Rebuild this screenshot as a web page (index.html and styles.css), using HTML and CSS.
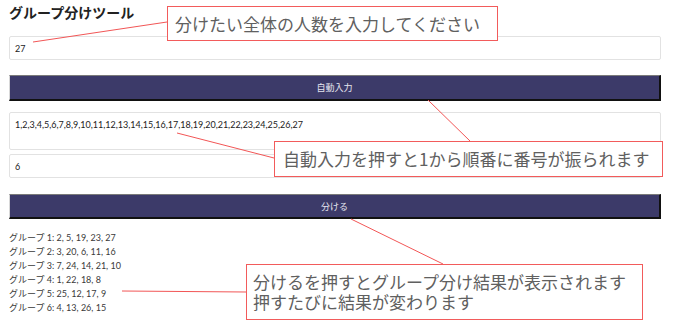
FILE: index.html
```html
<!DOCTYPE html>
<html lang="ja">
<head>
    <meta charset="UTF-8">
    <title>グループ分けツール</title>
    <link rel="stylesheet" href="styles.css">
</head>
<body>
    <main class="tool">
        <h1>グループ分けツール</h1>
        <input type="text" class="field" id="total" value="27">
        <button class="btn btn-auto">自動入力</button>
        <textarea class="field area" id="members">1,2,3,4,5,6,7,8,9,10,11,12,13,14,15,16,17,18,19,20,21,22,23,24,25,26,27</textarea>
        <input type="text" class="field field-groups" id="groups" value="6">
        <button class="btn btn-split">分ける</button>
        <div class="result">
            <p>グループ 1: 2, 5, 19, 23, 27</p>
            <p>グループ 2: 3, 20, 6, 11, 16</p>
            <p>グループ 3: 7, 24, 14, 21, 10</p>
            <p>グループ 4: 1, 22, 18, 8</p>
            <p>グループ 5: 25, 12, 17, 9</p>
            <p>グループ 6: 4, 13, 26, 15</p>
        </div>
    </main>

    <svg class="leaders" width="675" height="325" viewBox="0 0 675 325">
        <line x1="33" y1="42" x2="167" y2="22" />
        <line x1="177" y1="133" x2="274" y2="158" />
        <line x1="428" y1="100" x2="470" y2="141" />
        <line x1="351" y1="219" x2="443" y2="264" />
        <line x1="122" y1="291" x2="246" y2="292" />
    </svg>
    <div class="note note-1">分けたい全体の人数を入力してください</div>
    <div class="note note-2">自動入力を押すと1から順番に番号が振られます</div>
    <div class="note note-3">
        <span>分けるを押すとグループ分け結果が表示されます</span>
        <span>押すたびに結果が変わります</span>
    </div>
</body>
</html>
```

FILE: styles.css
```css
body {
    margin: 0;
    font-family: 'Lato', 'Noto Sans CJK JP', sans-serif;
    color: #333;
    background: #fff;
    position: relative;
    width: 675px;
    height: 325px;
    overflow: hidden;
}
.tool {
    width: 652px;
    margin-left: 9px;
    display: flex;
    flex-direction: column;
}
h1 {
    font-family: 'Noto Sans CJK JP', sans-serif;
    font-size: 14px;
    font-weight: bold;
    line-height: 20px;
    margin: 2px 0 0;
    color: #222;
}
.field {
    box-sizing: border-box;
    width: 100%;
    height: 24px;
    margin-top: 14px;
    padding: 0 5px;
    border: 1px solid #e2e2e2;
    border-radius: 2px;
    font-family: 'Lato', 'Noto Sans CJK JP', sans-serif;
    font-size: 9px;
    color: #222;
    background: #fff;
}
.area {
    height: 38px;
    margin-top: 11px;
    padding: 6px 5px;
    line-height: 12px;
    resize: none;
}
.field-groups {
    margin-top: 4px;
}
.btn {
    box-sizing: border-box;
    width: 100%;
    height: 26px;
    margin-top: 15px;
    background: #3c3a69;
    color: #e6e6f0;
    font-family: 'Noto Sans CJK JP', sans-serif;
    font-size: 9px;
    border-style: solid;
    border-width: 1px 2px 2px 1px;
    border-color: #7a7a7a #111 #111 #d8d8d8;
    padding: 0;
}
.btn-split {
    height: 25px;
    margin-top: 16px;
}
.result {
    margin-top: 12px;
}
.result p {
    margin: 0;
    font-size: 9px;
    line-height: 14px;
    color: #3a3a3a;
}
.leaders {
    position: absolute;
    left: 0;
    top: 0;
}
.leaders line {
    stroke: #f25656;
    stroke-width: 1;
}
.note {
    position: absolute;
    box-sizing: border-box;
    background: #fff;
    border: 1.5px solid #f25b5b;
    color: #606060;
    font-family: 'Noto Sans CJK JP', sans-serif;
    font-size: 17px;
    line-height: 20px;
    padding: 0 0 0 7px;
    display: flex;
    flex-direction: column;
    justify-content: center;
    white-space: nowrap;
}
.note-1 {
    left: 167px;
    top: 6px;
    width: 331px;
    height: 35px;
}
.note-2 {
    left: 274px;
    top: 141px;
    width: 389px;
    height: 36px;
    padding-left: 8px;
}
.note-3 {
    left: 246px;
    top: 264px;
    width: 397px;
    height: 56px;
    padding-left: 6px;
}
```
